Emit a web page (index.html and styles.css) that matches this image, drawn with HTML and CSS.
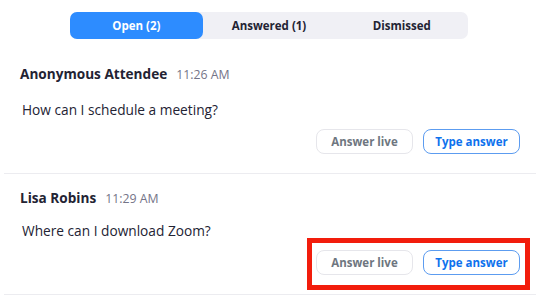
FILE: index.html
```html
<!DOCTYPE html>
<html>
<head>
<meta charset="utf-8">
<link rel="stylesheet" href="styles.css">
</head>
<body>
<div class="panel">
  <div class="tabs">
    <div class="tab active">Open (2)</div>
    <div class="tab">Answered (1)</div>
    <div class="tab">Dismissed</div>
  </div>
  <div class="list">
    <div class="item">
      <div class="head"><span class="name">Anonymous Attendee</span><span class="time">11:26 AM</span></div>
      <div class="question">How can I schedule a meeting?</div>
      <div class="actions">
        <div class="btns">
          <button class="btn live">Answer live</button>
          <button class="btn type">Type answer</button>
        </div>
      </div>
    </div>
    <div class="item">
      <div class="head"><span class="name">Lisa Robins</span><span class="time">11:29 AM</span></div>
      <div class="question q2">Where can I download Zoom?</div>
      <div class="actions">
        <div class="btns highlight">
          <button class="btn live">Answer live</button>
          <button class="btn type">Type answer</button>
        </div>
      </div>
    </div>
  </div>
</div>
</body>
</html>
```
FILE: styles.css
```css
html, body {
  margin: 0;
  padding: 0;
  background: #ffffff;
}
body {
  width: 556px;
  height: 299px;
  overflow: hidden;
  font-family: "Open Sans", "Noto Sans", sans-serif;
}
.panel {
  display: flex;
  flex-direction: column;
}
.tabs {
  margin: 12px 0 0 70px;
  width: 398px;
  height: 27px;
  display: flex;
  background: #f0f0f5;
  border-radius: 7px;
}
.tab {
  flex: 1;
  display: flex;
  align-items: center;
  justify-content: center;
  font-size: 11.5px;
  font-weight: 700;
  color: #232333;
  border-radius: 7px;
}
.tab.active {
  background: #2d8cff;
  color: #ffffff;
}
.list {
  margin: 0 20px 0 4px;
  display: flex;
  flex-direction: column;
}
.item {
  border-bottom: 1.5px solid #ececf0;
  padding: 0 0 0 16px;
  display: flex;
  flex-direction: column;
}
.item:first-child {
  padding-top: 25px;
}
.item + .item {
  padding-top: 14px;
}
.head {
  display: flex;
  align-items: baseline;
  gap: 9px;
  height: 20px;
}
.name {
  font-size: 13.6px;
  font-weight: 700;
  color: #232333;
}
.time {
  font-size: 12.3px;
  color: #747487;
}
.question {
  margin-top: 16px;
  margin-left: 2px;
  font-size: 13.7px;
  color: #232333;
  height: 20px;
  line-height: 20px;
}
.question.q2 {
  margin-top: 13px;
}
.actions {
  display: flex;
  justify-content: flex-end;
  padding: 9px 16px 19px 0;
}
.btns {
  display: flex;
  gap: 10px;
  position: relative;
}
.btn {
  width: 97px;
  height: 25px;
  border-radius: 8px;
  background: #ffffff;
  font-family: "Open Sans", "Noto Sans", sans-serif;
  font-size: 11.5px;
  font-weight: 700;
  padding: 0;
  display: flex;
  align-items: center;
  justify-content: center;
}
.btn.live {
  border: 1px solid #e6e6eb;
  color: #6e7680;
}
.btn.type {
  border: 1.5px solid #5c9cf0;
  color: #0e72ed;
}
.highlight::after {
  content: "";
  position: absolute;
  left: -9px;
  right: -10px;
  top: -12px;
  bottom: -15px;
  border: 5px solid #f21d0c;
  pointer-events: none;
}
```
